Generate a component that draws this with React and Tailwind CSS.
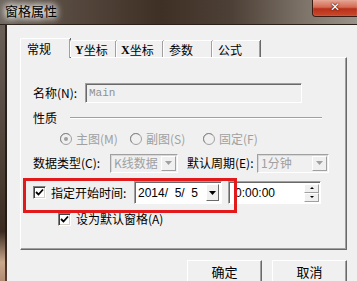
import React from "react";

function Radio({ checked }) {
  return (
    <svg width="12" height="12" viewBox="0 0 12 12" className="shrink-0">
      <circle cx="6" cy="6" r="5.5" fill="#f0f0f0" stroke="#a0a0a0" />
      <path d="M2 9.5 A5 5 0 0 1 9.5 2" fill="none" stroke="#8a8a8a" strokeWidth="1" />
      {checked && <circle cx="6" cy="6" r="2" fill="#a0a0a0" />}
    </svg>
  );
}

function Check() {
  return (
    <div className="w-[13px] h-[13px] shrink-0 bg-white border border-t-[#808080] border-l-[#808080] border-r-[#ffffff] border-b-[#ffffff] shadow-[inset_1px_1px_0_#404040,inset_-1px_-1px_0_#d4d0c8] flex items-center justify-center">
      <svg width="9" height="9" viewBox="0 0 9 9">
        <path d="M1 4 L3.5 6.5 L8 1.5" fill="none" stroke="#000" strokeWidth="1.8" />
      </svg>
    </div>
  );
}

function DownArrow({ color = "#000" }) {
  return (
    <svg width="7" height="4" viewBox="0 0 7 4">
      <path d="M0 0 H7 L3.5 4 Z" fill={color} />
    </svg>
  );
}

function Combo({ text, width, disabled }) {
  return (
    <div
      className={`h-[19px] flex items-center bg-[#f0f0f0] border border-t-[#a0a0a0] border-l-[#a0a0a0] border-r-white border-b-white shadow-[inset_1px_1px_0_#d8d8d8] ${width}`}
    >
      <span className={`flex-1 pl-[3px] ${disabled ? "text-[#a0a0a0]" : ""}`}>{text}</span>
      <div className="w-[15px] h-[15px] mr-[1px] bg-[#f0f0f0] border border-t-white border-l-white border-r-[#a0a0a0] border-b-[#a0a0a0] flex items-center justify-center">
        <DownArrow color="#a0a0a0" />
      </div>
    </div>
  );
}

export default function App() {
  return (
    <div className="w-[357px] h-[281px] overflow-hidden flex flex-col font-['Noto_Sans_CJK_SC',sans-serif] text-[12px] leading-none text-black bg-[#f0f0f0]">
      {/* Title bar */}
      <div className="h-[25px] shrink-0 flex items-start justify-between bg-[linear-gradient(90deg,#6e675f_0%,#5a4d43_15%,#3f3025_45%,#4d4036_65%,#7d7368_85%,#9a938b_100%)] border-b border-[#2a211b]">
        <div className="pl-[5px] pt-[4px] text-[13px] text-black [text-shadow:0_0_6px_#fff,0_0_8px_#fff,0_0_10px_#fff]">
          窗格属性
        </div>
        <div className="w-[46px] h-[17px] mr-[-1px] rounded-bl-[4px] border border-t-0 border-[#3b1a12] bg-[linear-gradient(180deg,#e5a595_0%,#d46a52_45%,#b8301a_55%,#c94a2c_100%)] flex items-center justify-center shadow-[inset_0_0_1px_#f4c0b0]">
          <span className="text-white font-bold text-[12px] font-['DejaVu_Sans',sans-serif] [text-shadow:0_0_2px_#400,0_0_1px_#400] -mt-[2px]">
            ✕
          </span>
        </div>
      </div>

      <div className="flex flex-1">
        {/* left frame */}
        <div className="w-[7px] shrink-0 flex">
          <div className="w-[5px] bg-[linear-gradient(180deg,#6a6058_0%,#4a3b30_60%,#3a2a20_80%,#c9a88c_92%,#b08870_100%)]" />
          <div className="w-[2px] bg-[linear-gradient(180deg,#2c241e_0%,#231a14_80%,#5a4032_100%)]" />
        </div>

        {/* client */}
        <div className="flex-1 bg-[#f0f0f0] pl-[13px] pt-[13px] flex flex-col">
          {/* tabs */}
          <div className="flex items-end h-[19px] relative z-10">
            <div className="w-[50px] h-[20px] -mb-[1px] bg-[#f0f0f0] border-l border-t border-white rounded-tl-[2px] shadow-[inset_-1px_0_0_#a0a0a0,1px_0_0_#696969] flex pt-[4px] pl-[6px]">
              常规
            </div>
            <div className="w-[46px] h-[17px] bg-[#f0f0f0] border-l border-t border-white rounded-tl-[2px] shadow-[inset_-1px_0_0_#a0a0a0,1px_0_0_#696969] flex pt-[3px] pl-[4px]">
              <span className="font-['Liberation_Serif',serif] font-bold">Y</span>坐标
            </div>
            <div className="w-[47px] h-[17px] bg-[#f0f0f0] border-l border-t border-white rounded-tl-[2px] shadow-[inset_-1px_0_0_#a0a0a0,1px_0_0_#696969] flex pt-[3px] pl-[4px]">
              <span className="font-['Liberation_Serif',serif] font-bold">X</span>坐标
            </div>
            <div className="w-[49px] h-[17px] bg-[#f0f0f0] border-l border-t border-white rounded-tl-[2px] shadow-[inset_-1px_0_0_#a0a0a0,1px_0_0_#696969] flex pt-[3px] pl-[5px]">
              参数
            </div>
            <div className="w-[48px] h-[17px] bg-[#f0f0f0] border-l border-t border-white rounded-tl-[2px] shadow-[inset_-1px_0_0_#a0a0a0,1px_0_0_#696969] flex pt-[3px] pl-[5px]">
              公式
            </div>
          </div>

          {/* panel */}
          <div className="w-[327px] h-[193px] shrink-0 bg-[#f0f0f0] border-l border-t border-white border-r border-b border-r-[#696969] border-b-[#696969] shadow-[inset_-1px_-1px_0_#a0a0a0] flex flex-col pl-[12px]">
            {/* name row */}
            <div className="flex items-center h-[20px] mt-[25px]">
              <span className="w-[52px]">名称(N):</span>
              <div className="w-[217px] h-[20px] flex items-center bg-[#f0f0f0] border border-t-[#a0a0a0] border-l-[#a0a0a0] border-r-white border-b-white shadow-[inset_1px_1px_0_#696969] pl-[3px] font-['Liberation_Mono',monospace] text-[11px] text-[#909090]">
                Main
              </div>
            </div>

            {/* group */}
            <div className="flex items-center h-[14px] mt-[8px]">
              <span className="w-[37px]">性质</span>
              <div className="w-[252px] h-[2px] border-t border-[#a0a0a0] border-b border-b-white" />
            </div>

            {/* radios */}
            <div className="flex items-center h-[14px] mt-[7px] pl-[27px] text-[#a0a0a0]">
              <Radio checked />
              <span className="ml-[4px] w-[54px]">主图(M)</span>
              <Radio />
              <span className="ml-[4px] w-[57px]">副图(S)</span>
              <Radio />
              <span className="ml-[4px]">固定(F)</span>
            </div>

            {/* data type row */}
            <div className="flex items-center h-[20px] mt-[7px]">
              <span className="w-[77px]">数据类型(C):</span>
              <Combo text="K线数据" width="w-[68px]" disabled />
              <span className="ml-[9px] w-[70px]">默认周期(E):</span>
              <Combo text="1分钟" width="w-[72px]" disabled />
            </div>

            {/* start time row */}
            <div className="flex items-center h-[23px] mt-[8px] relative">
              <div className="absolute left-[-10px] top-[-3px] w-[214px] h-[35px] border-[3px] border-[#e31a1c] pointer-events-none z-10" />
              <Check />
              <span className="ml-[5px] w-[83px]">指定开始时间:</span>
              <div className="w-[88px] h-[23px] flex items-center bg-white border border-t-[#a0a0a0] border-l-[#a0a0a0] border-r-white border-b-white shadow-[inset_1px_1px_0_#696969]">
                <span className="flex-1 pl-[3px] font-['Liberation_Sans',sans-serif] text-[12px] whitespace-pre">2014/  5/  5</span>
                <div className="w-[13px] h-[17px] mr-[2px] bg-[#f0f0f0] border border-t-white border-l-white border-r-[#696969] border-b-[#696969] flex items-center justify-center">
                  <DownArrow />
                </div>
              </div>
              <div className="ml-[6px] w-[93px] h-[23px] flex items-center bg-white border border-t-[#a0a0a0] border-l-[#a0a0a0] border-r-white border-b-white shadow-[inset_1px_1px_0_#696969]">
                <span className="flex-1 pl-[6px] font-['Liberation_Sans',sans-serif] text-[12px]">0:00:00</span>
                <div className="flex flex-col mr-[1px]">
                  <div className="w-[15px] h-[9px] bg-[#f0f0f0] border border-t-white border-l-white border-r-[#a0a0a0] border-b-[#a0a0a0] flex items-center justify-center">
                    <div className="w-0 h-0 border-l-[2px] border-r-[2px] border-b-[2px] border-l-transparent border-r-transparent border-b-black" />
                  </div>
                  <div className="w-[15px] h-[9px] bg-[#f0f0f0] border border-t-white border-l-white border-r-[#a0a0a0] border-b-[#a0a0a0] flex items-center justify-center">
                    <div className="w-0 h-0 border-l-[2px] border-r-[2px] border-t-[2px] border-l-transparent border-r-transparent border-t-black" />
                  </div>
                </div>
              </div>
            </div>

            {/* default checkbox */}
            <div className="flex items-center h-[14px] mt-[8px] pl-[25px]">
              <Check />
              <span className="ml-[5px]">设为默认窗格(A)</span>
            </div>
          </div>

          {/* buttons */}
          <div className="flex mt-[10px] pl-[167px] gap-[10px]">
            <div className="w-[75px] h-[23px] bg-[#f0f0f0] border border-t-white border-l-white border-r-[#696969] border-b-[#696969] shadow-[inset_-1px_-1px_0_#a0a0a0] flex items-center justify-center text-[13px]">
              确定
            </div>
            <div className="w-[75px] h-[23px] bg-[#f0f0f0] border border-t-white border-l-white border-r-[#696969] border-b-[#696969] shadow-[inset_-1px_-1px_0_#a0a0a0] flex items-center justify-center text-[13px]">
              取消
            </div>
          </div>
        </div>
      </div>
    </div>
  );
}
